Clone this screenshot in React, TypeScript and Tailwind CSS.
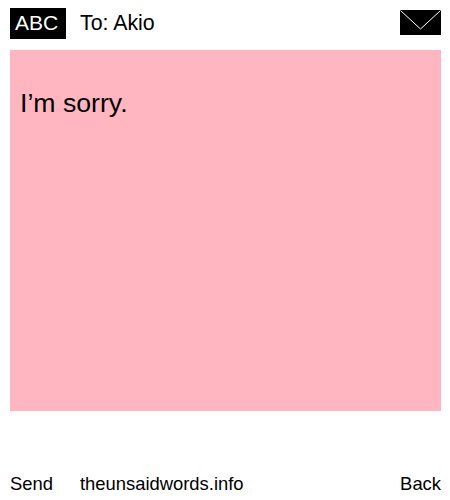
import React from 'react';

function EnvelopeIcon() {
  return (
    <svg width="41" height="25" viewBox="0 0 41 25" className="block">
      <rect width="41" height="25" fill="#000" />
      <path d="M0.5 0.5 L20.5 19 L40.5 0.5" fill="none" stroke="#fff" strokeWidth="1" />
    </svg>
  );
}

export default function App() {
  return (
    <div className="w-[450px] h-[500px] bg-white text-black flex flex-col pl-[10px] pr-[9px] pt-2 font-['Liberation_Sans',Arial,sans-serif]">
      <div className="flex items-center h-[31px]">
        <div className="w-14 h-[31px] bg-black text-white text-[21px] leading-[30px] text-center pr-[3px]">ABC</div>
        <div className="ml-[14px] text-[21.33px] leading-[31px]">To: Akio</div>
        <div className="ml-auto mb-[2px]">
          <EnvelopeIcon />
        </div>
      </div>
      <div className="mt-[11px] h-[361px] bg-[#ffb6c1] px-[10px] pt-[37px] text-[26.67px] leading-[32px]">
        I’m sorry.
      </div>
      <div className="mt-[62px] flex items-center text-[18.4px] leading-[22px]">
        <span>Send</span>
        <span className="ml-[27px]">theunsaidwords.info</span>
        <span className="ml-auto">Back</span>
      </div>
    </div>
  );
}
